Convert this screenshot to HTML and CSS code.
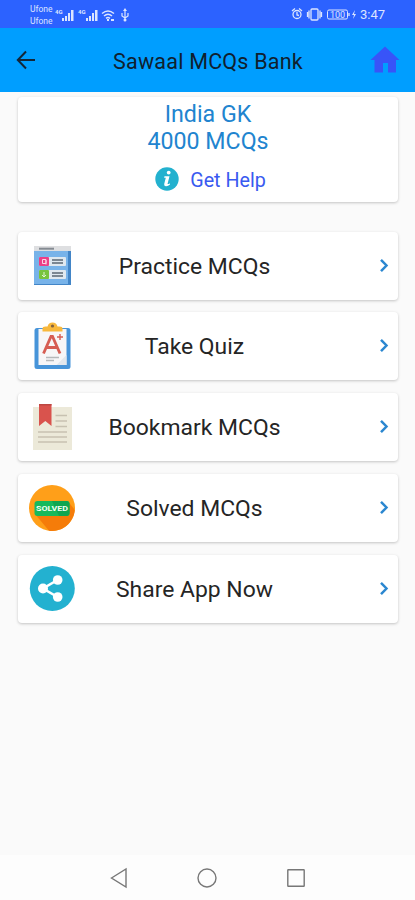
FILE: index.html
```html
<!DOCTYPE html>
<html lang="en">
<head>
<meta charset="utf-8">
<title>Sawaal MCQs Bank</title>
<link rel="stylesheet" href="styles.css">
</head>
<body>
<div class="status">
  <div class="carrier"><span>Ufone</span><span>Ufone</span></div>
  <svg class="signals" width="76" height="16" viewBox="0 0 76 16" fill="#dce5ff">
    <text x="0" y="6.5" font-size="6" font-weight="700">4G</text>
    <path d="M7 11h2v3H7zM10 9h2v5h-2zM13 6h2v8h-2zM16 3h2.500v11H16z"/>
    <text x="23" y="6.500" font-size="6" font-weight="700">4G</text>
    <path d="M31 11h2v3h-2zM34 9h2v5h-2zM37 6h2v8h-2zM40 3h2.500v11H40z"/>
    <g fill="none" stroke="#dce5ff" stroke-width="1.500"><path d="M47 6.500q6-5 12 0M49 9q4-3.500 8 0M51 11.300q2-1.500 4 0"/><path d="M70 3v11M67 6v3l3 2M73 6v3l-3 2" stroke-width="1.200"/></g>
    <path d="M52 12h2v2h-2zM56 12h3v2h-3zM68 4l2-3 2 3z"/><circle cx="70" cy="13" r="1.500"/>
  </svg>
  <svg class="power" width="66" height="16" viewBox="0 0 66 16" fill="none" stroke="#dce5ff" stroke-width="1.300">
    <circle cx="6" cy="8.500" r="4"/><path d="M1 5l3-2.500M11 5L8 2.500M6 6v3l2 .5"/>
    <rect x="20" y="3" width="7" height="11" rx="1"/><path d="M18 4.500v8M29 4.500v8M16.500 6v5M30.500 6v5"/>
    <rect x="36.500" y="4" width="20" height="9" rx="1.500" stroke-width="1"/><path d="M58 7v3"/>
    <text x="39" y="11.500" font-size="9" fill="#dce5ff" stroke="none">100</text>
    <path d="M64 4l-3 5h2l-1 4 3-5h-2z" fill="#dce5ff" stroke="none"/>
  </svg>
  <span class="clock">3:47</span>
</div>
<header class="appbar">
  <svg class="back" width="20" height="20" viewBox="0 0 20 20" fill="none" stroke="#132638" stroke-width="2"><path d="M19 10H2M10 1.500L1.800 10l8.200 8.500"/></svg>
  <h1>Sawaal MCQs Bank</h1>
  <svg class="home" width="30" height="27" viewBox="0 0 30 27" fill="#3854f8"><path d="M15 .5L29.500 14H26v12.500h-8V17h-5v9.500H4.500V14H.5z"/></svg>
</header>
<main>
  <section class="card summary">
    <p>India GK</p>
    <p>4000 MCQs</p>
    <div class="help">
      <svg width="24" height="24" viewBox="0 0 24 24"><circle cx="12" cy="12" r="11.700" fill="#23b1cf"/><circle cx="13.700" cy="5.600" r="1.900" fill="#fff"/><path d="M9.500 9.300h5l-2 7.700q1 .4 2.500-.8v1.300q-2.200 2-4.300 1.700-2-.3-1.500-2.200l1.600-6.200H9.100z" fill="#fff"/></svg>
      <span>Get Help</span>
    </div>
  </section>
  <nav>
    <a class="card row">
      <svg class="icon" width="46" height="46" viewBox="0 0 46 46"><path d="M5 4h37v38H5z" fill="#78b3e9"/><path d="M39 8h3v34H5v-1h34z" fill="#4285c7"/><path d="M5 3h37v5H5z" fill="#dedfe1"/><path d="M10 4.700h15v2H10z" fill="#858b92"/><rect x="10" y="14" width="27" height="9" rx="1" fill="#dfe8ef"/><rect x="10" y="27" width="27" height="9" rx="1" fill="#dfe8ef"/><rect x="10" y="14" width="10" height="9" rx="1" fill="#ed3e87"/><rect x="10" y="27" width="10" height="9" rx="1" fill="#79c43e"/><path d="M13.500 16.500h3.500v4h-3.500zM17 17v4.500" fill="none" stroke="#fbd4e4"/><path d="M15 29v5m-2-2l2 2 2-2" fill="none" stroke="#e2f4d4"/><path d="M23 17h11m-11 3h11M23 30h11m-11 3h11" stroke="#7b8792" stroke-width="2"/></svg>
      <span class="label">Practice MCQs</span>
      <svg class="chev" width="10" height="15" viewBox="0 0 10 15"><path d="M2 1.800l5.500 5.700L2 13.200"/></svg>
    </a>
    <a class="card row">
      <svg class="icon" width="46" height="48" viewBox="0 0 46 48"><rect x="5.500" y="6" width="36" height="41" rx="2.500" fill="#4794d9"/><path d="M9.500 7h28v36h-28z" fill="#f7f6f7"/><path d="M37.500 33v10h-10z" fill="#e2e7ed"/><path d="M13.500 9.500V6.500q0-2 3-2h2q1-4 5-4t5 4h2q3 0 3 2v3z" fill="#f8b83c"/><circle cx="23.500" cy="4" r="1.600" fill="#81613f"/><path d="M14.500 31.500l7.500-17h1.500l7.500 17M17.500 25.500h10" fill="none" stroke="#d65d53" stroke-width="2.800"/><path d="M31 12v6m-3-3h6" stroke="#d65d53" stroke-width="1.400"/><path d="M17 35.500h13M17 38.500h8" stroke="#b5b8ba" stroke-width="1.300"/></svg>
      <span class="label">Take Quiz</span>
      <svg class="chev" width="10" height="15" viewBox="0 0 10 15"><path d="M2 1.800l5.500 5.700L2 13.200"/></svg>
    </a>
    <a class="card row">
      <svg class="icon" width="46" height="48" viewBox="0 0 46 48"><path d="M4 4h39v43H4z" fill="#ece9d9"/><path d="M10 1h12.500v22l-6.200-5L10 23z" fill="#d9534d"/><path d="M10 1h12.500v1.500H10z" fill="#bd4742"/><path d="M26.500 12.500H38M26.500 18H38M26.500 23.500H38M9 29h29M9 34h29M9 39h29" stroke="#c7c1b1" stroke-width="1.500"/></svg>
      <span class="label">Bookmark MCQs</span>
      <svg class="chev" width="10" height="15" viewBox="0 0 10 15"><path d="M2 1.800l5.500 5.700L2 13.200"/></svg>
    </a>
    <a class="card row">
      <svg class="icon" width="46" height="46" viewBox="0 0 46 46"><circle cx="23" cy="23" r="23" fill="#ff9f19"/><path d="M6 29L39.500 17l6.300 8A23 23 0 0 1 20 45.800z" fill="#f57c09"/><rect x="5.500" y="16" width="35" height="15" rx="3" fill="#16b95c"/><path d="M23 16h14.500q3 0 3 3v9q0 3-3 3H30z" fill="#0fa650"/><text x="7" y="25.700" textLength="32" lengthAdjust="spacingAndGlyphs" font-size="7.500" font-weight="700" fill="#f2fff5">SOLVED</text></svg>
      <span class="label">Solved MCQs</span>
      <svg class="chev" width="10" height="15" viewBox="0 0 10 15"><path d="M2 1.800l5.500 5.700L2 13.200"/></svg>
    </a>
    <a class="card row">
      <svg class="icon" width="46" height="46" viewBox="0 0 46 46"><circle cx="23.300" cy="22.500" r="22.500" fill="#23b1d0"/><path d="M28.500 14L14 22.500 28.500 31" fill="none" stroke="#fff" stroke-width="2.600"/><g fill="#fff"><circle cx="28.700" cy="14" r="4.800"/><circle cx="14" cy="22.500" r="5"/><circle cx="28.700" cy="31" r="4.800"/></g></svg>
      <span class="label">Share App Now</span>
      <svg class="chev" width="10" height="15" viewBox="0 0 10 15"><path d="M2 1.800l5.500 5.700L2 13.200"/></svg>
    </a>
  </nav>
</main>
<footer>
  <svg width="18" height="22" viewBox="0 0 18 22"><path d="M1.500 11L16 2v18z"/></svg>
  <svg width="20" height="22" viewBox="0 0 20 22"><circle cx="10" cy="11" r="9"/></svg>
  <svg width="20" height="22" viewBox="0 0 20 22"><rect x="1.800" y="2.800" width="16.400" height="16.400" rx=".5"/></svg>
</footer>
</body>
</html>
```

FILE: styles.css
```css
* { box-sizing: border-box; }
body { margin: 0; width: 415px; height: 900px; display: flex; flex-direction: column; background: #fafafa; font-family: Roboto, sans-serif; color: #252525; overflow: hidden; }
h1, p { margin: 0; font-weight: 400; }
svg { display: block; flex: none; }
.status { height: 28px; background: #2c62ff; display: flex; align-items: center; padding: 0 29px 0 30px; color: #dce5ff; }
.carrier { display: flex; flex-direction: column; width: 25px; font-size: 8.5px; line-height: 12px; padding-top: 2px; }
.signals { margin-top: 1px; }
.power { margin-left: auto; }
.clock { width: 26px; margin-left: 3px; font-size: 13px; line-height: 16px; padding-top: 1px; white-space: nowrap; }
.appbar { height: 64px; background: #009eff; display: flex; align-items: center; padding: 0 15px 0 16px; }
h1 { flex: 1; text-align: center; font-size: 21.5px; line-height: 28px; padding: 3px 0 0 10px; color: #10202e; letter-spacing: .22px; }
.home { margin-top: -2px; }
main { flex: 1; padding: 5px 17px 0 18px; }
.card { background: #fff; border-radius: 4px; box-shadow: 0 1px 3px rgba(0,0,0,.22); }
.summary { height: 105px; padding-top: 4px; text-align: center; font-size: 23.2px; line-height: 27px; color: #2184cf; }
.help { display: flex; align-items: center; justify-content: center; gap: 11px; height: 24px; margin-top: 12px; padding-left: 5px; font-size: 19.7px; color: #395af0; }
.help span { padding-top: 2px; }
nav { display: grid; gap: 12.75px; margin-top: 29.6px; }
.row { height: 68px; display: grid; grid-template-columns: 46px 1fr 10px; align-items: center; padding: 0 9px 0 11px; }
.icon { margin-left: -.5px; }
.label { text-align: center; padding-right: 65px; font-size: 22.9px; line-height: 28px; padding-top: 2px; }
.chev { margin-top: -1px; }
.chev path { fill: none; stroke: #2b87d0; stroke-width: 2.5; }
footer { height: 45px; background: #fdfdfd; display: flex; justify-content: space-between; align-items: center; padding: 1px 109px 0 110px; }
footer svg { fill: none; stroke: #777; stroke-width: 1.4; }
```
